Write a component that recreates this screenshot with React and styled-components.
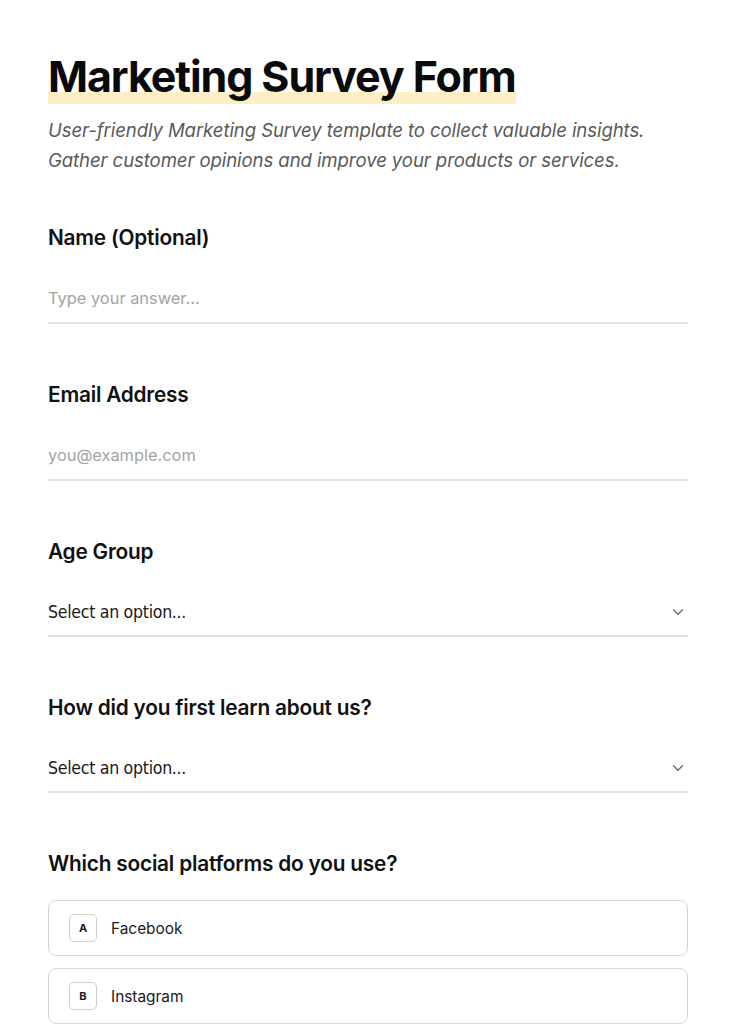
import React from "react";
import styled, { createGlobalStyle } from "styled-components";

const GlobalStyle = createGlobalStyle`
  html, body {
    margin: 0;
    padding: 0;
    background: #ffffff;
  }
  body {
    font-family: Inter, "Noto Sans", sans-serif;
    color: #111111;
  }
`;

const Page = styled.main`
  padding: 48px 48px 0;
  width: 640px;
`;

const Title = styled.h1`
  display: inline-block;
  margin: 0;
  font-size: 43px;
  font-weight: 700;
  letter-spacing: -1.1px;
  line-height: 56px;
  color: #0a0a0a;
  background: linear-gradient(to bottom, transparent 44px, #fdefc3 44px, #fdefc3 57px, transparent 57px);
`;

const Subtitle = styled.p`
  margin: 11px 0 0;
  font-size: 18.6px;
  font-style: italic;
  line-height: 30px;
  color: #5a5a5a;
  letter-spacing: -0.1px;
`;

const Field = styled.section`
  margin-top: ${(p) => p.$top || 57}px;
`;

const Label = styled.h2`
  margin: 0;
  font-size: 20.8px;
  font-weight: 600;
  line-height: 28px;
  letter-spacing: -0.2px;
  color: #111111;
`;

const Input = styled.div`
  margin-top: 34px;
  padding-bottom: ${(p) => (p.$select ? 11 : 12)}px;
  border-bottom: 2px solid #e3e3e3;
  font-size: 16.4px;
  line-height: 24px;
  color: ${(p) => (p.$muted ? "#a3a3a3" : "#1a1a1a")};
  display: flex;
  align-items: center;
  justify-content: space-between;
`;

const SelectText = styled.span`
  font-family: "DejaVu Sans Condensed", "DejaVu Sans", sans-serif;
  font-stretch: condensed;
  font-size: 17.6px;
  line-height: 24px;
  letter-spacing: -0.3px;
`;

const Chevron = styled.svg`
  display: block;
  width: 18px;
  height: 18px;
  margin-right: 1px;
  color: #666666;
`;

const Options = styled.div`
  margin-top: 22px;
  display: flex;
  flex-direction: column;
  gap: 12px;
`;

const Option = styled.div`
  height: 56px;
  box-sizing: border-box;
  border: 1px solid #d6d6d6;
  border-radius: 8px;
  display: flex;
  align-items: center;
  padding-left: 20px;
  gap: 14px;
  font-size: 15.4px;
  color: #1a1a1a;
`;

const Key = styled.span`
  width: 28px;
  height: 28px;
  box-sizing: border-box;
  border: 1px solid #cfcfcf;
  border-radius: 5px;
  display: flex;
  align-items: center;
  justify-content: center;
  font-size: 11px;
  font-weight: 700;
`;

const ChevronDown = () => (
  <Chevron viewBox="0 0 24 24" fill="none" stroke="currentColor" strokeWidth="1.6" strokeLinecap="round" strokeLinejoin="round">
    <path d="M6 9l6 6 6-6" />
  </Chevron>
);

const App = () => {
  return (
    <Page>
      <GlobalStyle />
      <Title>Marketing Survey Form</Title>
      <Subtitle>
        User-friendly Marketing Survey template to collect valuable insights.
        <br />
        Gather customer opinions and improve your products or services.
      </Subtitle>

      <Field $top={49}>
        <Label>Name (Optional)</Label>
        <Input $muted>Type your answer...</Input>
      </Field>

      <Field>
        <Label>Email Address</Label>
        <Input $muted>you@example.com</Input>
      </Field>

      <Field>
        <Label>Age Group</Label>
        <Input $select>
          <SelectText>Select an option...</SelectText>
          <ChevronDown />
        </Input>
      </Field>

      <Field>
        <Label>How did you first learn about us?</Label>
        <Input $select>
          <SelectText>Select an option...</SelectText>
          <ChevronDown />
        </Input>
      </Field>

      <Field>
        <Label>Which social platforms do you use?</Label>
        <Options>
          <Option>
            <Key>A</Key>
            Facebook
          </Option>
          <Option>
            <Key>B</Key>
            Instagram
          </Option>
        </Options>
      </Field>
    </Page>
  );
};

export default App;
